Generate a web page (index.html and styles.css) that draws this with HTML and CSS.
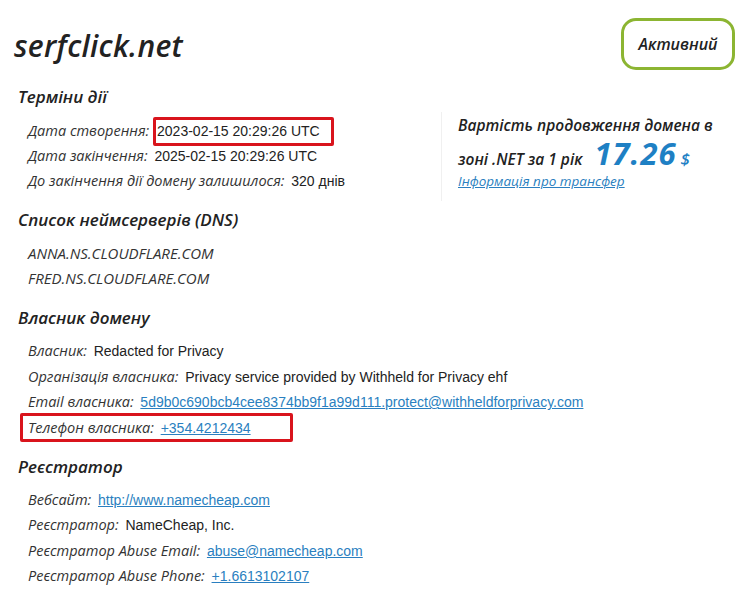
FILE: index.html
```html
<!DOCTYPE html>
<html lang="uk">
<head>
  <meta charset="UTF-8">
  <title>serfclick.net</title>
  <link rel="stylesheet" href="styles.css">
</head>
<body>
  <div class="page">
    <div class="header">
      <h1 class="domain">serfclick.net</h1>
      <div class="status">Активний</div>
    </div>

    <h2 class="section-title">Терміни дії</h2>
    <div class="terms">
      <ul class="info-list">
        <li><span class="label">Дата створення:</span> <span class="value mark">2023-02-15 20:29:26 UTC</span></li>
        <li><span class="label">Дата закінчення:</span> <span class="value">2025-02-15 20:29:26 UTC</span></li>
        <li><span class="label">До закінчення дії домену залишилося:</span> <span class="value">320 днів</span></li>
      </ul>
      <div class="price">
        <div class="price-text">Вартість продовження домена в</div>
        <div class="price-text">зоні .NET за 1 рік <span class="price-num">17.26</span><span class="price-cur">$</span></div>
        <a class="price-link" href="#">Інформація про трансфер</a>
      </div>
    </div>

    <h2 class="section-title">Список неймсерверів (DNS)</h2>
    <ul class="info-list">
      <li class="ns">ANNA.NS.CLOUDFLARE.COM</li>
      <li class="ns">FRED.NS.CLOUDFLARE.COM</li>
    </ul>

    <h2 class="section-title">Власник домену</h2>
    <ul class="info-list">
      <li><span class="label">Власник:</span> <span class="value">Redacted for Privacy</span></li>
      <li><span class="label">Організація власника:</span> <span class="value">Privacy service provided by Withheld for Privacy ehf</span></li>
      <li><span class="label">Email власника:</span> <a class="value link" href="#">5d9b0c690bcb4cee8374bb9f1a99d111.protect@withheldforprivacy.com</a></li>
      <li class="mark-row"><span class="label">Телефон власника:</span> <a class="value link" href="#">+354.4212434</a></li>
    </ul>

    <h2 class="section-title">Реєстратор</h2>
    <ul class="info-list">
      <li><span class="label">Вебсайт:</span> <a class="value link" href="#">http://www.namecheap.com</a></li>
      <li><span class="label">Реєстратор:</span> <span class="value">NameCheap, Inc.</span></li>
      <li><span class="label">Реєстратор Abuse Email:</span> <a class="value link" href="#">abuse@namecheap.com</a></li>
      <li><span class="label">Реєстратор Abuse Phone:</span> <a class="value link" href="#">+1.6613102107</a></li>
    </ul>
  </div>
</body>
</html>
```
FILE: styles.css
```css
body {
  margin: 0;
  padding: 0;
  background-color: white;
  color: #222;
  font-family: 'Open Sans', sans-serif;
}
.page {
  padding: 18px 5px 0 14px;
}
.header {
  display: flex;
  justify-content: space-between;
  align-items: flex-start;
}
.domain {
  margin: 10px 0 0 0;
  font-size: 30px;
  font-style: italic;
  font-weight: 600;
  letter-spacing: 0.3px;
  color: #222;
  line-height: 36px;
}
.status {
  width: 108px;
  height: 46px;
  border: 3px solid #8cb532;
  border-radius: 15px;
  display: flex;
  align-items: center;
  justify-content: center;
  font-style: italic;
  font-weight: 600;
  font-size: 16px;
  color: #222;
}
.section-title {
  margin: 0;
  padding-left: 4px;
  font-size: 17px;
  font-style: italic;
  font-weight: 600;
  line-height: 24px;
  color: #222;
}
.section-title:first-of-type {
  margin-top: 15px;
}
.info-list {
  list-style: none;
  margin: 8.5px 0 14.5px 0;
  padding: 0 0 0 14px;
}
.info-list li {
  height: 25.4px;
  font-size: 14.5px;
  line-height: 25px;
  white-space: nowrap;
}
.label {
  font-style: italic;
  color: #333;
}
.value {
  font-family: 'Liberation Sans', sans-serif;
  font-size: 14px;
  color: #222;
  margin-left: 3px;
}
.info-list li.ns {
  font-size: 15px;
  font-style: italic;
  color: #333;
}
.link {
  color: #2a7fc0;
  text-decoration: underline;
}
.mark {
  display: inline-block;
  border: 3px solid #d9141c;
  border-radius: 2px;
  padding: 0 11px 0 1px;
  margin: -2px 0 -2px 0;
  line-height: 23px;
}
.info-list li.mark-row {
  height: 29.4px;
  border: 3px solid #d9141c;
  border-radius: 2px;
  width: 273px;
  box-sizing: border-box;
  margin: -2px 0 -2px -8px;
  padding-left: 5px;
  line-height: 23px;
}
.terms {
  display: flex;
  align-items: flex-start;
}
.terms .info-list {
  width: 413px;
}
.price {
  margin-top: 3px;
  border-left: 1px solid #f0f0f0;
  padding: 0 0 8px 16px;
}
.price-text {
  font-size: 15.5px;
  font-weight: 600;
  font-style: italic;
  color: #222;
  line-height: 26px;
}
.price-num {
  font-size: 31px;
  font-weight: 700;
  letter-spacing: 1px;
  line-height: 1;
  color: #1e80c4;
  margin-left: 8px;
}
.price-cur {
  font-size: 17px;
  font-weight: 600;
  color: #1e80c4;
  margin-left: 4px;
}
.price-link {
  display: block;
  margin-top: -3px;
  font-size: 13.5px;
  font-style: italic;
  color: #2a7fc0;
  line-height: 24px;
}
```
